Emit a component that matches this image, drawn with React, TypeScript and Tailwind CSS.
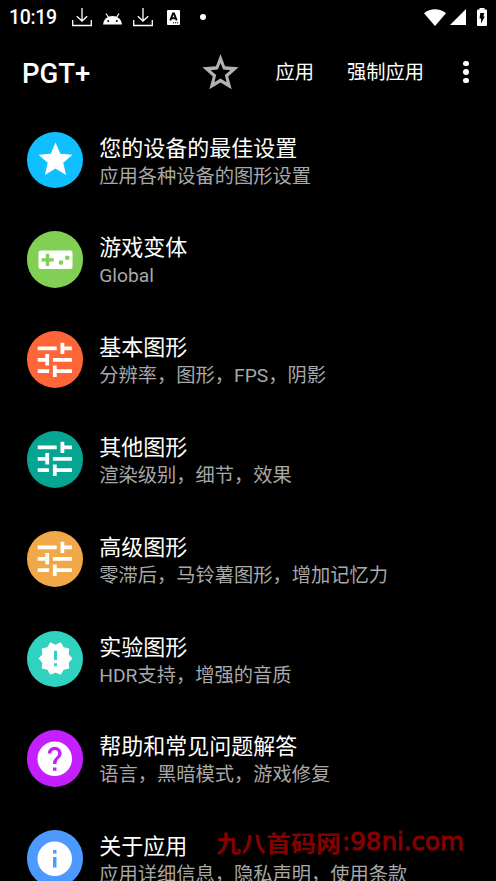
import type { ReactNode } from 'react'
import { MdHelp, MdInfo, MdNewReleases, MdStar, MdTune } from 'react-icons/md'

interface Ajuste {
  titulo: string
  detalle: string
  fondo: string
  icono: ReactNode
}

function Mando() {
  return (
    <svg width="35" height="20" viewBox="0 0 35 20" className="fill-white">
      <path
        fillRule="evenodd"
        d="M2.500 .5h30a2 2 0 0 1 2 2v14.500a2 2 0 0 1-2 2h-30a2 2 0 0 1-2-2V2.500a2 2 0 0 1 2-2zM7.800 3.700v4.500H3.500v3.400h4.300v4.500h3.400v-4.500h4.500V8.200h-4.500V3.700zM20.700 12.600a2.300 2.300 0 1 0 4.600 0a2.300 2.300 0 1 0-4.600 0zM27 7.800a2.300 2.300 0 1 0 4.600 0a2.300 2.300 0 1 0-4.600 0z"
      />
    </svg>
  )
}

const AJUSTES: Ajuste[] = [
  { titulo: '您的设备的最佳设置', detalle: '应用各种设备的图形设置', fondo: 'bg-[#10bfff]', icono: <MdStar size={41} /> },
  { titulo: '游戏变体', detalle: 'Global', fondo: 'bg-[#82cf55]', icono: <Mando /> },
  { titulo: '基本图形', detalle: '分辨率，图形，FPS，阴影', fondo: 'bg-[#ff6637]', icono: <MdTune size={45.6} /> },
  { titulo: '其他图形', detalle: '渲染级别，细节，效果', fondo: 'bg-[#05a592]', icono: <MdTune size={45.6} /> },
  { titulo: '高级图形', detalle: '零滞后，马铃薯图形，增加记忆力', fondo: 'bg-[#f1a848]', icono: <MdTune size={45.6} /> },
  { titulo: '实验图形', detalle: 'HDR支持，增强的音质', fondo: 'bg-[#30d2c0]', icono: <MdNewReleases size={37} /> },
  { titulo: '帮助和常见问题解答', detalle: '语言，黑暗模式，游戏修复', fondo: 'bg-[#c41fff]', icono: <MdHelp size={41.5} /> },
  { titulo: '关于应用', detalle: '应用详细信息，隐私声明，使用条款', fondo: 'bg-[#4c99ff]', icono: <MdInfo size={41.5} /> },
]

function Descarga() {
  return (
    <svg width="20" height="20" viewBox="0 0 20 20" fill="none" stroke="white" strokeWidth="1.3">
      <path d="M.7 13v5.500h18.600V13M10 1v13M4.800 9.300L10 14l5.200-4.700" />
    </svg>
  )
}

function BarraEstado() {
  return (
    <div className="flex h-[34px] items-center pl-[9px] pr-[9px]">
      <span className="w-[63px] pt-[2px] text-[19.500px] font-medium tracking-[-0.350px]">10:19</span>
      <Descarga />
      <svg width="19" height="12" viewBox="0 0 19 12" className="ml-[11px] mt-[3px]">
        <path d="M0 11.500a9.500 8.500 0 0 1 19 0z" fill="white" />
        <path d="M5.500 4.500L3 .5M13.500 4.500L16 .5" stroke="white" strokeWidth="1.200" />
        <circle cx="5.200" cy="8" r="1" />
        <circle cx="13.800" cy="8" r="1" />
      </svg>
      <div className="ml-[11px]">
        <Descarga />
      </div>
      <svg width="13" height="15" viewBox="0 0 13 15" className="ml-[14px]">
        <rect width="13" height="15" rx="1" fill="white" />
        <path d="M3.300 10.500L6 3.500h1L9.700 10.500M4.500 8.200h4" fill="none" stroke="black" strokeWidth="1.900" />
        <path d="M6 12.800h1.200M8 12.800h1.200M10 12.800h1.200" stroke="black" strokeWidth="1" />
      </svg>
      <span className="ml-[20px] size-[5.500px] rounded-full bg-white" />

      <div className="ml-auto flex items-center">
        <svg width="22" height="17" viewBox="0 0 22 17">
          <path d="M0 4.300C6-1.100 16-1.100 22 4.300L11 17z" fill="white" />
        </svg>
        <svg width="16" height="16" viewBox="0 0 16 16" className="ml-[4px]">
          <path d="M16 0v16H0z" fill="white" />
        </svg>
        <svg width="10" height="18" viewBox="0 0 10 18" className="ml-[11px]">
          <path d="M2.500 0h5v1.500H9a1 1 0 0 1 1 1V17a1 1 0 0 1-1 1H1a1 1 0 0 1-1-1V2.500a1 1 0 0 1 1-1h1.500z" fill="white" />
          <path d="M3.300 5h4L6.300 8.500h1.500L4 15.500V10.500H2.500z" />
        </svg>
      </div>
    </div>
  )
}

function BarraApp() {
  return (
    <div className="flex h-[76px] items-center pl-[22px] pr-[27.500px]">
      <h1 className="w-[180px] pt-[3px] text-[27.500px] font-medium">PGT+</h1>
      <svg width="37" height="36" viewBox="0 0 37 36" className="fill-[#b3b3b3]">
        <path
          fillRule="evenodd"
          d="M18.500 0L23 12.200 36.500 13.200 26.200 22.500 29.700 35.300 18.500 28.500 7.300 35.300 10.800 22.500.5 13.200 14 12.200zM18.500 9L15.800 15.600 8.600 16.200 14.200 20.900 12.400 28.200 18.500 24.400 24.600 28.200 22.800 20.900 28.400 16.200 21.200 15.600z"
        />
      </svg>
      <button className="ml-[36.500px] pt-[3px] text-[19.250px]">应用</button>
      <button className="ml-[33px] pt-[3px] text-[19.250px]">强制应用</button>
      <div className="ml-auto flex flex-col gap-[3px]">
        <span className="size-[5.500px] rounded-full bg-white" />
        <span className="size-[5.500px] rounded-full bg-white" />
        <span className="size-[5.500px] rounded-full bg-white" />
      </div>
    </div>
  )
}

export default function App() {
  return (
    <div className="relative h-[881px] w-[496px] overflow-hidden bg-black font-[Roboto,'Noto_Sans_CJK_SC',sans-serif] text-white">
      <BarraEstado />
      <BarraApp />

      {/* Lista de ajustes */}
      <div className="flex flex-col">
        {AJUSTES.map((a) => (
          <div key={a.titulo} className="flex h-[99.800px] shrink-0 items-center pl-[26.750px]">
            <div className={`flex size-[56.500px] shrink-0 items-center justify-center rounded-full ${a.fondo}`}>
              {a.icono}
            </div>
            <div className="ml-[16px] whitespace-nowrap pt-[5.500px]">
              <p className="text-[22px] leading-[28px]">{a.titulo}</p>
              <p className="text-[19.250px] leading-[28px] text-[#a8a8a8]">{a.detalle}</p>
            </div>
          </div>
        ))}
      </div>

      {/* Marca de agua */}
      <div className="absolute left-[216px] top-[828px] flex items-center whitespace-nowrap leading-[28px] text-[#850000]">
        <span className="w-[126px] origin-left scale-y-[0.900] font-['Noto_Sans_CJK_SC',sans-serif] text-[25px] font-bold">九八首码网</span>
        <span className="font-['DejaVu_Sans',sans-serif] text-[24.500px] [-webkit-text-stroke:1px_#850000]">:98ni.com</span>
      </div>
    </div>
  )
}
